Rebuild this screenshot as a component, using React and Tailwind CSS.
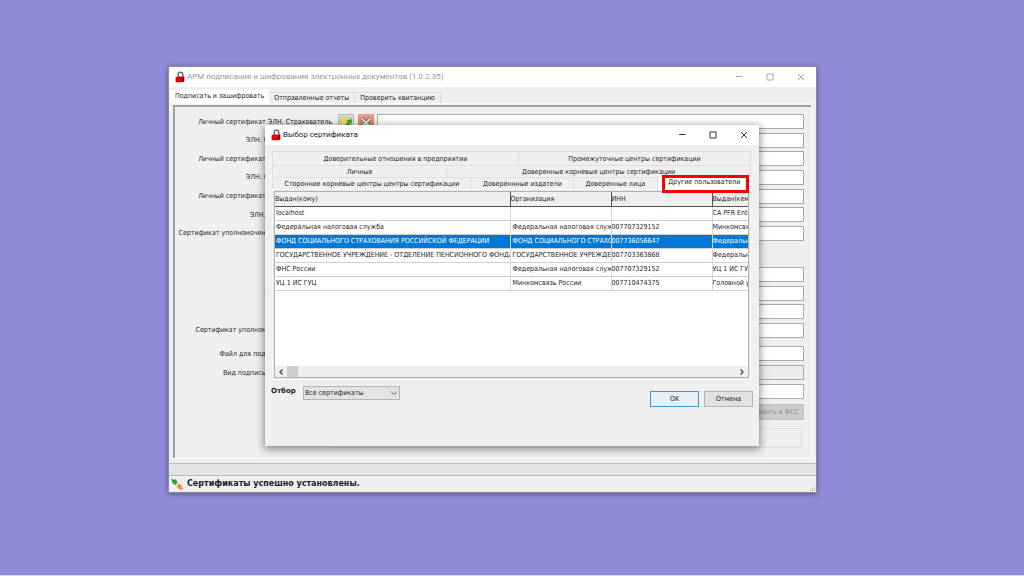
import React, { useState } from "react";

const mainTabs = ["Подписать и зашифровать", "Отправленные отчеты", "Проверить квитанцию"];

const personalFields = [
    { id: "eln-personal", label: "Личный сертификат ЭЛН. Страхователь" },
    { id: "eln-fss", label: "ЭЛН. Сертификат ФСС РФ" },
    { id: "pvso-personal", label: "Личный сертификат ЭЛН. Страхователь" },
    { id: "pvso-fss", label: "ЭЛН. Сертификат ФСС РФ" },
    { id: "mo-personal", label: "Личный сертификат ЭЛН. Страхователь" },
    { id: "mo-fss", label: "ЭЛН. Сертификат МО РФ" },
    { id: "authorized-fss", label: "Сертификат уполномоченного лица в ФСС РФ" },
];

const reportFields = [
    { id: "report-a", label: "" },
    { id: "report-b", label: "Личный сертификат" },
    { id: "report-c", label: "" },
    { id: "report-authorized", label: "Сертификат уполномоченного лица ФСС" },
];

const fileFields = [
    { id: "file", label: "Файл для подписи и шифрования" },
    { id: "signature-kind", label: "Вид подписываемого документа", disabled: true },
    { id: "result", label: "" },
];

const columns = ["Выдан(кому)", "Организация", "ИНН", "Выдан(кем)"];

const certificates = [
    ["localhost", "", "", "CA PFR Enterprise"],
    ["Федеральная налоговая служба", "Федеральная налоговая служба", "007707329152", "Минкомсвязь России"],
    ["ФОНД СОЦИАЛЬНОГО СТРАХОВАНИЯ РОССИЙСКОЙ ФЕДЕРАЦИИ", "ФОНД СОЦИАЛЬНОГО СТРАХОВАНИЯ", "007736056647", "Федеральное казначейство"],
    ["ГОСУДАРСТВЕННОЕ УЧРЕЖДЕНИЕ - ОТДЕЛЕНИЕ ПЕНСИОННОГО ФОНДА", "ГОСУДАРСТВЕННОЕ УЧРЕЖДЕНИЕ", "007703363868", "Федеральное казначейство"],
    ["ФНС России", "Федеральная налоговая служба", "007707329152", "УЦ 1 ИС ГУЦ"],
    ["УЦ 1 ИС ГУЦ", "Минкомсвязь России", "007710474375", "Головной удостоверяющий центр"],
];

const LockIcon = () => (
    <svg viewBox="0 0 10 12" className="h-3 w-2.5 shrink-0" aria-hidden="true">
        <path d="M3.2 6.5V3.4C3.2 .4 7.8 .4 7.8 3.4V6" fill="none" stroke="#5f5a5a" strokeWidth="1.3" />
        <path d="M.6 6.2 3 5.6H9.2V10L7.6 11.2H.6Z" fill="#e80000" />
        <path d="M7.6 6.8 9.2 5.6V10L7.6 11.2Z" fill="#7d0000" />
    </svg>
);

const WindowButtons = ({ className }) => (
    <div className={`ml-auto flex h-full items-center ${className}`}>
        <button aria-label="Свернуть" className="flex h-full w-[31px] items-center justify-center">
            <svg viewBox="0 0 8 8" className="size-2" stroke="currentColor"><path d="M1 3.5H7.5" /></svg>
        </button>
        <button aria-label="Развернуть" className="flex h-full w-[31px] items-center justify-center">
            <svg viewBox="0 0 8 8" className="size-2" fill="none" stroke="currentColor"><path d="M1 1H7V7H1Z" /></svg>
        </button>
        <button aria-label="Закрыть" className="flex h-full w-[31px] items-center justify-center">
            <svg viewBox="0 0 8 8" className="size-2" stroke="currentColor"><path d="M1 1 7 7M7 1 1 7" /></svg>
        </button>
    </div>
);

const Field = ({ id, label, disabled = false, children }) => (
    <div className="flex h-[15px] items-center">
        <label htmlFor={id} className="flex w-[157px] shrink-0 justify-end whitespace-nowrap">{label}</label>
        <div className="ml-1.5 flex w-[39px] shrink-0 gap-1">{children}</div>
        <input
            id={id}
            type="text"
            aria-label={label || "Сертификат"}
            disabled={disabled}
            className="h-[15px] min-w-0 flex-1 border border-[#ababab] bg-white px-1 outline-none disabled:bg-[#ececec]"
        />
    </div>
);

const CertificateTab = ({ name, active, onSelect, className }) => (
    <button
        role="tab"
        aria-selected={active === name}
        onClick={() => onSelect(name)}
        className={`${active === name ? "bg-white pb-0.5" : "border-t border-r border-[#dfdfdf]"} flex items-center justify-center whitespace-nowrap ${className}`}
    >
        {name}
    </button>
);

const CertificateDialog = () => {
    const [active, setActive] = useState("Другие пользователи");
    const [selected, setSelected] = useState(2);

    return (
        <section role="dialog" aria-label="Выбор сертификата" className="absolute top-[58px] right-[57px] left-24 bg-[#efefef] shadow-[0_2px_8px_1px_rgba(0,0,0,0.45)]">
            <header className="flex h-5 items-center gap-0.5 bg-white pl-1.5">
                <LockIcon />
                <h2 className="font-['Roboto'] text-[8px] text-[#222]">Выбор сертификата</h2>
                <WindowButtons className="text-[#333]" />
            </header>

            <div className="pt-1.5 pr-2 pl-[7px]">
                <div role="tablist" className="border-l border-[#dfdfdf]">
                    <div className="flex h-[14px]">
                        <CertificateTab name="Доверительные отношения в предприятии" active={active} onSelect={setActive} className="flex-[246]" />
                        <CertificateTab name="Промежуточные центры сертификации" active={active} onSelect={setActive} className="flex-[232]" />
                    </div>
                    <div className="flex h-3">
                        <CertificateTab name="Личные" active={active} onSelect={setActive} className="flex-[174]" />
                        <CertificateTab name="Доверенные корневые центры сертификации" active={active} onSelect={setActive} className="flex-[304]" />
                    </div>
                    <div className="flex h-3">
                        <CertificateTab name="Сторонние корневые центры центры сертификации" active={active} onSelect={setActive} className="flex-[199]" />
                        <CertificateTab name="Довереннные издатели" active={active} onSelect={setActive} className="flex-[102]" />
                        <CertificateTab name="Доверенные лица" active={active} onSelect={setActive} className="flex-[83]" />
                        <div className="relative flex flex-[94]">
                            <CertificateTab name="Другие пользователи" active={active} onSelect={setActive} className="flex-1" />
                            <span className="pointer-events-none absolute -top-0.5 right-0.5 -bottom-1 left-1 border-[3px] border-[#f60000]" />
                        </div>
                    </div>
                </div>

                <div className="border border-white bg-[#e3e3e3] p-px">
                    <div className="flex h-[187px] flex-col border border-[#b5b5b5] bg-white">
                        <div className="min-h-0 flex-1 overflow-hidden">
                            <table className="w-full table-fixed border-collapse">
                                <colgroup>
                                    <col className="w-[235px]" />
                                    <col className="w-[101px]" />
                                    <col className="w-[101px]" />
                                    <col />
                                </colgroup>
                                <thead>
                                    <tr className="h-[14px] border-b border-[#555] bg-[#efefef]">
                                        {columns.map((column) => (
                                            <th key={column} className="overflow-hidden border-r border-[#555] text-left font-normal whitespace-nowrap last:border-r-0">{column}</th>
                                        ))}
                                    </tr>
                                </thead>
                                <tbody>
                                    {certificates.map((row, index) => (
                                        <tr
                                            key={index}
                                            onClick={() => setSelected(index)}
                                            className={`${selected === index ? "bg-[#0078d7] text-white" : "bg-white"} h-[14px] border-b border-[#cfcfcf]`}
                                        >
                                            {row.map((cell, i) => (
                                                <td key={i} className="overflow-hidden border-r border-[#d5d5d5] whitespace-nowrap first:pl-px last:border-r-0 nth-2:pl-0.5">{cell}</td>
                                            ))}
                                        </tr>
                                    ))}
                                </tbody>
                            </table>
                        </div>
                        <div className="flex h-[11px] shrink-0 items-center bg-[#efefef] text-[#444]">
                            <button aria-label="Влево" className="flex w-3 justify-center">
                                <svg viewBox="0 0 6 6" className="size-1.5" fill="none" stroke="currentColor" strokeWidth="1.3"><path d="M4.5 .5 2 3 4.5 5.5" /></svg>
                            </button>
                            <div className="h-full w-[11px] bg-[#cdcdcd]" />
                            <button aria-label="Вправо" className="ml-auto flex w-3 justify-center">
                                <svg viewBox="0 0 6 6" className="size-1.5" fill="none" stroke="currentColor" strokeWidth="1.3"><path d="M1.5 .5 4 3 1.5 5.5" /></svg>
                            </button>
                        </div>
                    </div>
                </div>
            </div>

            <footer className="flex items-start pt-1.5 pr-1.5 pb-[39px] pl-1.5">
                <label htmlFor="filter" className="w-8 font-['DejaVu_Sans'] font-bold">Отбор</label>
                <div className="relative">
                    <select id="filter" className="h-[14px] w-[97px] appearance-none border border-[#b5b5b5] bg-[#e3e3e3] pl-px">
                        <option>Все сертификаты</option>
                    </select>
                    <svg viewBox="0 0 8 6" className="pointer-events-none absolute top-1 right-0.5 h-1.5 w-2" fill="none" stroke="#666"><path d="M1 1.5 4 4.5 7 1.5" /></svg>
                </div>
                <div className="mt-[5px] ml-auto flex gap-[5px]">
                    <button className="h-4 w-[49px] border border-[#3c96dc] bg-[#e4f0fa]">OK</button>
                    <button className="h-4 w-[49px] border border-[#b5b5b5] bg-[#e1e1e1]">Отмена</button>
                </div>
            </footer>
        </section>
    );
};

export default function App() {
    const [tab, setTab] = useState(mainTabs[0]);

    return (
        <div className="flex min-h-screen flex-col border-b border-[#dcdaf5] bg-[#8f8bd8] font-['DejaVu_Sans_Condensed','DejaVu_Sans',sans-serif] text-[7px] leading-[10px] text-[#1c1c1c]">
            <main className="relative mt-[66px] mr-[207px] ml-[168px] border border-[#8a8a98] bg-[#efefef] shadow-[0_1px_5px_rgba(0,0,0,0.4)]">
                <header className="flex h-5 items-center gap-0.5 bg-white pl-1.5">
                    <LockIcon />
                    <h1 className="font-['Roboto'] text-[8px] text-[#9a9a9a]">АРМ подписания и шифрования электронных документов (1.0.2.35)</h1>
                    <WindowButtons className="text-[#aaa]" />
                </header>

                <div role="tablist" className="flex h-4 items-end pt-0.5 pl-px">
                    {mainTabs.map((name) => (
                        <button
                            key={name}
                            role="tab"
                            aria-selected={tab === name}
                            onClick={() => setTab(name)}
                            className={`${tab === name ? "h-[13px] bg-white pb-px" : "h-[11px] border-t border-r border-[#dcdcdc]"} px-[5px] whitespace-nowrap`}
                        >
                            {name}
                        </button>
                    ))}
                </div>

                <div className="mx-1 border-t border-r border-b border-white pt-px">
                    <div className="border-t-2 border-l-2 border-[#a0a0a0] pt-[7px] pr-[7px] pb-2.5">
                        <div className="flex h-[127px] flex-col justify-between">
                            {personalFields.map((field, index) => (
                                <Field key={field.id} {...field}>
                                    {index === 0 && (
                                        <>
                                            <button aria-label="Выбрать сертификат" className="flex size-4 items-center justify-center border border-[#b5b5b5] bg-[#dedede]">
                                                <svg viewBox="0 0 14 14" className="size-3.5">
                                                    <path d="M1 3 5 1 7 3 12 2V12L2 13Z" fill="#ecd779" stroke="#c2a64c" strokeWidth=".5" />
                                                    <path d="M5 12C6 9.5 7.5 8 9 7.5L7.5 5.5 13 4 12.5 9.5 11 8.5C10 11 8 12.5 5 12Z" fill="#43a22d" />
                                                </svg>
                                            </button>
                                            <button aria-label="Очистить сертификат" className="flex size-4 items-center justify-center bg-linear-to-b from-[#f0a090] to-[#e0604c]">
                                                <svg viewBox="0 0 14 14" className="size-3.5">
                                                    <path d="M2.5 3.5 11.5 12M11.5 3.5 2.5 12" stroke="#777" strokeWidth="4" />
                                                    <path d="M2.5 3.5 11.5 12M11.5 3.5 2.5 12" stroke="#ddd" strokeWidth="2" />
                                                </svg>
                                            </button>
                                        </>
                                    )}
                                </Field>
                            ))}
                        </div>
                        <div className="mt-[26px] flex h-[71px] flex-col justify-between">
                            {reportFields.map((field) => <Field key={field.id} {...field} />)}
                        </div>
                        <div className="mt-2 flex h-[53px] flex-col justify-between">
                            {fileFields.map((field) => <Field key={field.id} {...field} />)}
                        </div>
                        <div className="mt-[5px] flex justify-end">
                            <button disabled className="h-4 border border-[#bfbfbf] bg-[#cccccc] px-1 text-[#8f8f8f]">Отправить в ФСС</button>
                        </div>
                        <div className="mt-2 mr-0.5 ml-[157px] h-5 border border-[#dfdfdf]" />
                    </div>
                </div>

                <div className="mt-1 h-[13px] border-y border-[#bdbdbd] bg-[#e4e4e4]" />
                <footer className="flex h-4 items-center gap-1 pl-0.5">
                    <svg viewBox="0 0 12 12" className="size-3" aria-hidden="true">
                        <path d="M0 .5 2 1.5 5 1.5 6.5 4.5 4.5 7 1.8 5.5Z" fill="#2f9b2f" />
                        <path d="M5.5 8 8.5 5.5 11 8.5 11.5 12 8 11Z" fill="#f08b35" />
                    </svg>
                    <p className="font-['DejaVu_Sans'] text-[8px] font-bold">Сертификаты успешно установлены.</p>
                    <svg viewBox="0 0 6 6" className="ml-auto size-1.5 self-end" fill="#aaa" aria-hidden="true"><path d="M4 0h1v1h-1zM4 2h1v1h-1zM2 2h1v1h-1zM4 4h1v1h-1zM2 4h1v1h-1zM0 4h1v1h-1z" /></svg>
                </footer>

                <CertificateDialog />
            </main>
        </div>
    );
}
